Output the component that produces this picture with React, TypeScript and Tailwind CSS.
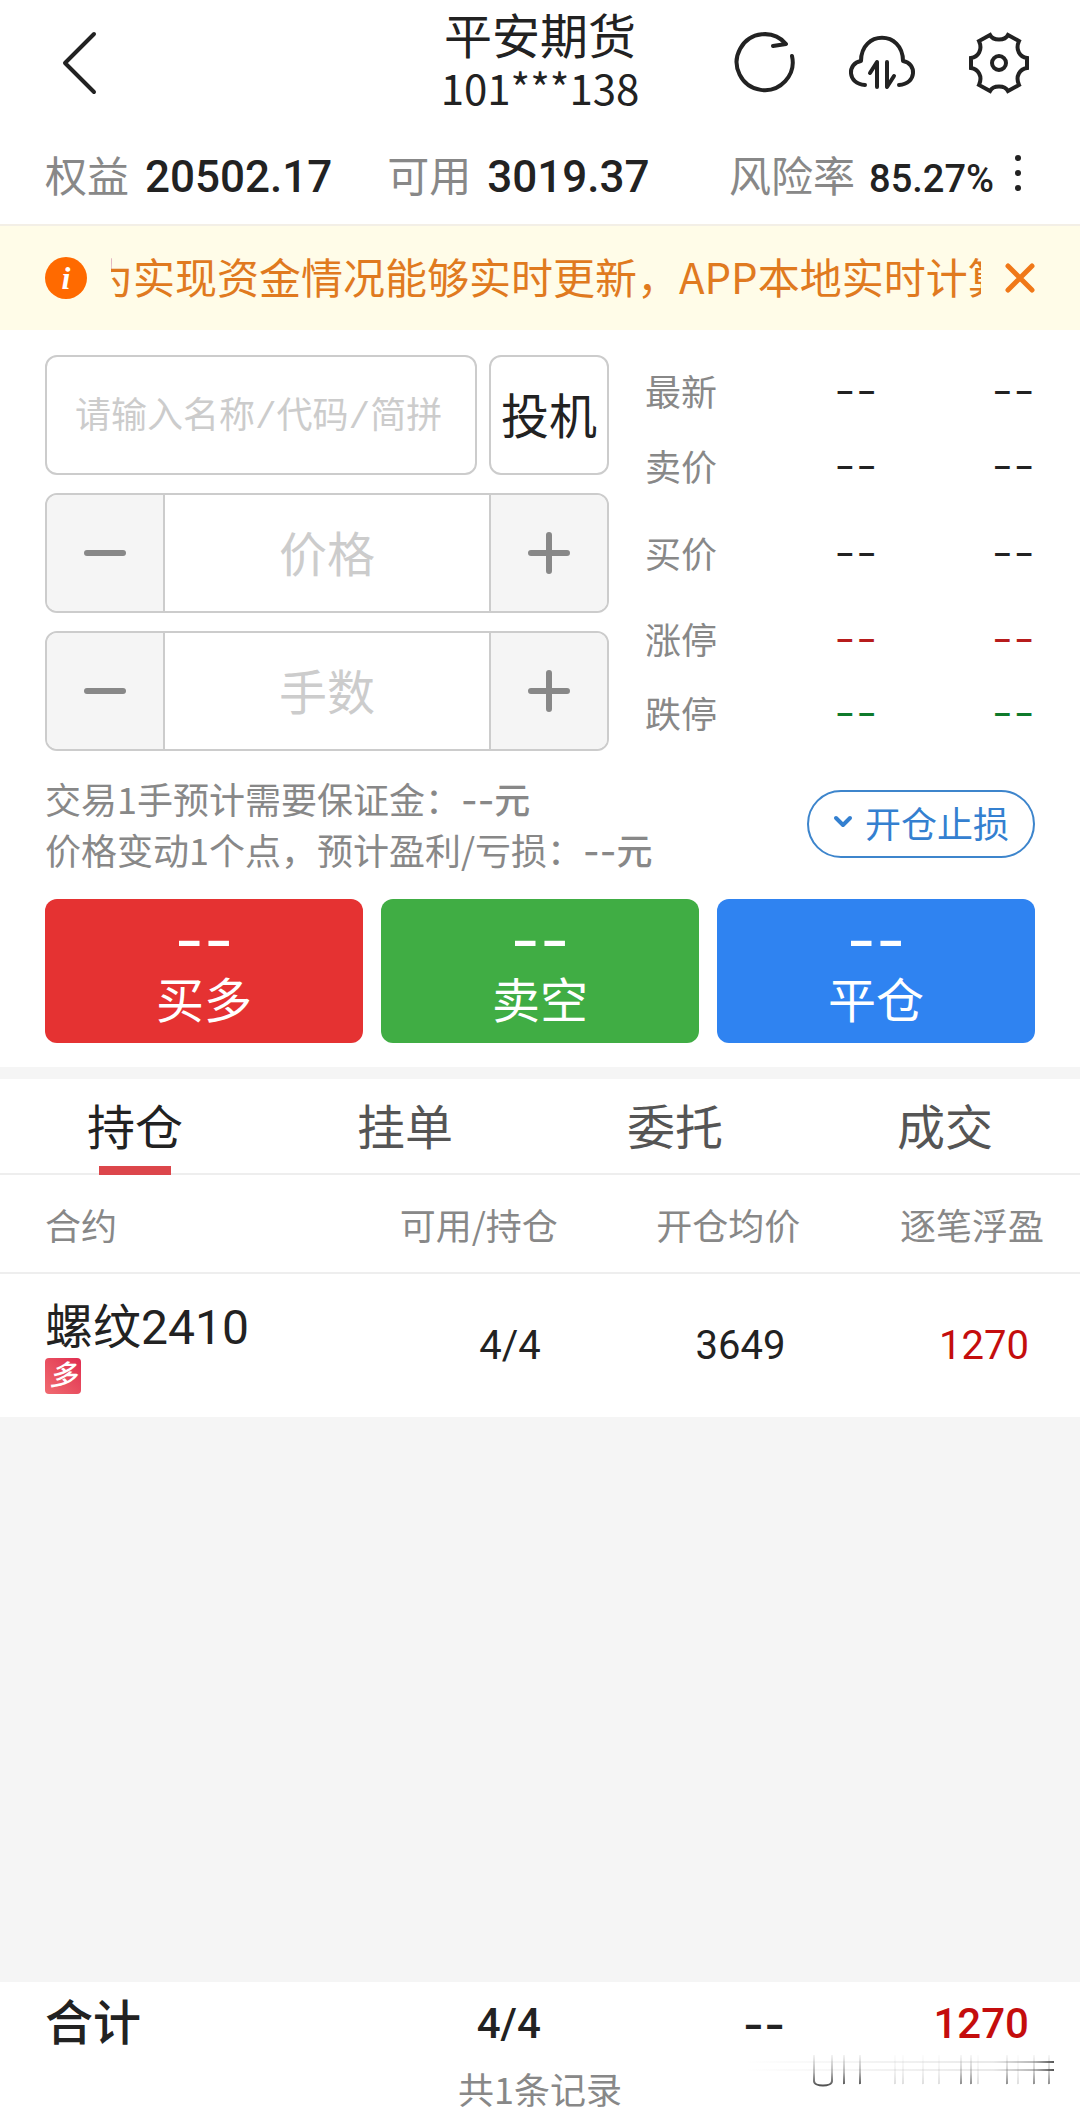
import { useState } from 'react';

const QUOTES = [
  { label: '最新', price: '--', volume: '--', color: 'text-[#222]', height: 'h-[70px]' },
  { label: '卖价', price: '--', volume: '--', color: 'text-[#222]', height: 'h-[80px]' },
  { label: '买价', price: '--', volume: '--', color: 'text-[#222]', height: 'h-[94px]' },
  { label: '涨停', price: '--', volume: '--', color: 'text-[#b71c1c]', height: 'h-[78px]' },
  { label: '跌停', price: '--', volume: '--', color: 'text-[#0f7a2b]', height: 'h-[70px]' },
];

const ACTIONS = [
  { label: '买多', price: '--', bg: 'bg-[#e53232]' },
  { label: '卖空', price: '--', bg: 'bg-[#40ad44]' },
  { label: '平仓', price: '--', bg: 'bg-[#2f83f1]' },
];

const TABS = ['持仓', '挂单', '委托', '成交'];

function Header() {
  return (
    <header className="flex h-[126px] items-center px-[45px] text-[#222]">
      <div className="flex-1">
        <button type="button" aria-label="返回" className="block">
          <svg width="72" height="72" viewBox="0 0 72 72" fill="none" stroke="currentColor" strokeWidth="4" strokeLinecap="round" strokeLinejoin="round">
            <path d="M49 7 20 36l29 29" />
          </svg>
        </button>
      </div>
      <div className="pb-[10px] text-center">
        <h1 className="text-[48px] leading-[58px]">平安期货</h1>
        <p className="text-[42px] leading-[50px]">101***138</p>
      </div>
      <div className="flex flex-1 justify-end gap-[45px]">
        <button type="button" aria-label="刷新">
          <svg width="72" height="72" viewBox="0 0 72 72" fill="none" stroke="currentColor" strokeWidth="4" strokeLinecap="round" strokeLinejoin="round">
            <path d="M63 29a28 28 0 1 1-6-12l-13 2" />
          </svg>
        </button>
        <button type="button" aria-label="同步">
          <svg width="72" height="72" viewBox="0 0 72 72" fill="none" stroke="currentColor" strokeWidth="4" strokeLinecap="round" strokeLinejoin="round">
            <path d="M19 58C1 57 1 36 15 34C15 3 57 3 57 34C71 36 71 57 53 58" />
            <path d="M24 46l7-11v25M48 49l-7 11V35" />
          </svg>
        </button>
        <button type="button" aria-label="设置">
          <svg width="72" height="72" viewBox="0 0 72 72" fill="none" stroke="currentColor" strokeWidth="4">
            <path d="M27 8C30 14 42 14 45 8L56 14C52 23 57 30 64 31V41C57 42 52 49 56 58L45 64C42 58 30 58 27 64L16 58C20 49 15 42 8 41V31C15 30 20 23 16 14Z" />
            <circle cx="36" cy="36" r="7" />
          </svg>
        </button>
      </div>
    </header>
  );
}

function AccountBar() {
  return (
    <section className="flex h-[98px] items-baseline pl-[45px] pr-[58px] pt-[18px] text-[#222]">
      <div className="flex items-baseline gap-4">
        <span className="text-[42px] leading-[60px] text-[#888]">权益</span>
        <span className="font-[Roboto] text-[44px] font-medium">20502.17</span>
      </div>
      <div className="ml-[55px] flex items-baseline gap-4">
        <span className="text-[42px] leading-[60px] text-[#888]">可用</span>
        <span className="font-[Roboto] text-[44px] font-medium">3019.37</span>
      </div>
      <div className="ml-auto flex items-baseline">
        <span className="text-[42px] leading-[60px] text-[#888]">风险率</span>
        <span className="ml-[14px] font-[Roboto] text-[38px] font-medium">85.27%</span>
        <button type="button" aria-label="更多" className="ml-[20px]">
          <svg width="8" height="38" viewBox="0 0 8 38" fill="currentColor">
            <circle cx="4" cy="4" r="3" />
            <circle cx="4" cy="19" r="3" />
            <circle cx="4" cy="34" r="3" />
          </svg>
        </button>
      </div>
    </section>
  );
}

function Notice({ onClose }: { onClose: () => void }) {
  return (
    <div className="flex h-[106px] items-center border-t-2 border-[#f3efe6] bg-[#fffce8] px-[45px]">
      <span className="flex h-[42px] w-[42px] shrink-0 items-center justify-center rounded-full bg-[#ff6a00] font-['Liberation_Serif',serif] text-[32px] font-bold italic leading-none text-white">
        i
      </span>
      <div className="ml-[24px] flex min-w-0 flex-1 overflow-hidden pb-[4px] text-[42px] leading-[60px] text-[#e07a1f]">
        <span className="-ml-[20px] whitespace-nowrap">为实现资金情况能够实时更新，APP本地实时计算</span>
      </div>
      <button type="button" aria-label="关闭" onClick={onClose} className="ml-[24px] text-[#f07818]">
        <svg width="30" height="30" viewBox="0 0 30 30" fill="none" stroke="currentColor" strokeWidth="5" strokeLinecap="round">
          <path d="M3 3l24 24M27 3 3 27" />
        </svg>
      </button>
    </div>
  );
}

function Stepper({ label }: { label: string }) {
  return (
    <div className="flex h-[120px] overflow-hidden rounded-xl border-2 border-[#ccc]">
      <button type="button" aria-label={`减少${label}`} className="flex w-[118px] shrink-0 items-center justify-center border-r-2 border-[#ccc] bg-[#f5f5f5] text-[#888]">
        <svg width="44" height="44" viewBox="0 0 44 44" stroke="currentColor" strokeWidth="6" strokeLinecap="round">
          <path d="M4 22h36" />
        </svg>
      </button>
      <input aria-label={label} placeholder={label} className="min-w-0 flex-1 bg-white pb-[4px] text-center text-[48px] text-[#222] outline-none placeholder:text-[#ccc]" />
      <button type="button" aria-label={`增加${label}`} className="flex w-[118px] shrink-0 items-center justify-center border-l-2 border-[#ccc] bg-[#f5f5f5] text-[#888]">
        <svg width="44" height="44" viewBox="0 0 44 44" stroke="currentColor" strokeWidth="6" strokeLinecap="round">
          <path d="M4 22h36M22 4v36" />
        </svg>
      </button>
    </div>
  );
}

function OrderForm() {
  return (
    <section className="grid grid-cols-[minmax(0,564fr)_minmax(0,390fr)] gap-[36px] px-[45px] pt-[25px]">
      <div className="flex flex-col gap-[18px]">
        <div className="flex h-[120px] gap-[12px]">
          <input
            aria-label="合约"
            placeholder="请输入名称/代码/简拼"
            className="min-w-0 flex-1 rounded-xl border-2 border-[#ccc] px-[28px] pt-[8px] font-['Liberation_Mono','Noto_Sans_CJK_SC',monospace] text-[36px] text-[#222] outline-none placeholder:text-[#ccc]"
          />
          <button type="button" className="w-[120px] shrink-0 whitespace-nowrap rounded-xl border-2 border-[#ccc] pb-[4px] text-[48px] text-[#222]">投机</button>
        </div>
        <Stepper label="价格" />
        <Stepper label="手数" />
      </div>
      <dl className="whitespace-nowrap">
        {QUOTES.map((q) => (
          <div key={q.label} className={`flex items-center ${q.height}`}>
            <dt className="flex-1 text-[36px] text-[#888]">{q.label}</dt>
            <dd className={`font-[Inter] text-[48px] font-light leading-none ${q.color}`}>{q.price}</dd>
            <dd className={`ml-[114px] font-[Inter] text-[48px] font-light leading-none ${q.color}`}>{q.volume}</dd>
          </div>
        ))}
      </dl>
    </section>
  );
}

function Estimate() {
  return (
    <section className="flex items-center justify-between px-[45px] pt-[22px] text-[36px] leading-[51px] text-[#888]">
      <div>
        <p>交易1手预计需要保证金：<b className="font-[Inter,'Noto_Sans_CJK_SC'] font-medium leading-none">--元</b></p>
        <p>价格变动1个点，预计盈利/亏损：<b className="font-[Inter,'Noto_Sans_CJK_SC'] font-medium leading-none">--元</b></p>
      </div>
      <button type="button" className="flex h-[68px] items-center gap-[12px] rounded-full border-2 border-[#3d85cc] px-[24px] pb-[4px] text-[#3480d0]">
        <svg width="20" height="14" viewBox="0 0 20 14" fill="none" stroke="currentColor" strokeWidth="4" strokeLinecap="round" strokeLinejoin="round">
          <path d="M3 3l7 7 7-7" />
        </svg>
        开仓止损
      </button>
    </section>
  );
}

function Actions() {
  return (
    <section className="grid grid-cols-3 gap-[18px] px-[45px] py-[24px]">
      {ACTIONS.map((a) => (
        <button key={a.label} type="button" className={`flex h-[144px] flex-col items-center rounded-xl pt-[12px] text-white ${a.bg}`}>
          <span className="font-[Inter] text-[64px] leading-[58px]">{a.price}</span>
          <span className="text-[48px] leading-[56px]">{a.label}</span>
        </button>
      ))}
    </section>
  );
}

function Positions() {
  return (
    <table className="w-full table-fixed text-[#222]">
      <colgroup>
        <col className="w-[32%]" />
        <col className="w-[24%]" />
        <col className="w-[22%]" />
        <col className="w-[22%]" />
      </colgroup>
      <thead>
        <tr className="h-[98px] border-b-2 border-[#eee] text-[36px] text-[#888]">
          <th className="pl-[45px] text-left font-normal">合约</th>
          <th className="pr-[47px] text-right font-normal">可用/持仓</th>
          <th className="pr-[42px] text-right font-normal">开仓均价</th>
          <th className="pr-[36px] text-right font-normal">逐笔浮盈</th>
        </tr>
      </thead>
      <tbody>
        <tr className="h-[144px] font-[Roboto,'Noto_Sans_CJK_SC'] text-[40px]">
          <td className="pl-[45px]">
            <div className="text-[48px] leading-[60px]">螺纹2410</div>
            <span className="flex h-[36px] w-[36px] items-center justify-center rounded-sm bg-linear-to-tr from-[#f06a70] to-[#e02a50] text-[28px] font-medium italic leading-none text-white">多</span>
          </td>
          <td className="pr-[64px] text-right">4/4</td>
          <td className="pr-[57px] text-right">3649</td>
          <td className="pr-[51px] text-right text-[#c40d0d]">1270</td>
        </tr>
      </tbody>
    </table>
  );
}

// Faded stamp in the corner of the footer
function Stamp() {
  return (
    <svg className="absolute bottom-[20px] right-[24px] opacity-80" width="312" height="36" viewBox="0 0 312 36" fill="none" aria-hidden="true">
      <defs>
        <linearGradient id="stampV" x1="0" y1="0" x2="0" y2="34" gradientUnits="userSpaceOnUse">
          <stop offset="0" stopColor="#222" stopOpacity="0" />
          <stop offset="0.6" stopColor="#222" stopOpacity="0.4" />
          <stop offset="1" stopColor="#222" />
        </linearGradient>
        <linearGradient id="stampH" x1="0" y1="0" x2="312" y2="0" gradientUnits="userSpaceOnUse">
          <stop offset="0" stopColor="#222" stopOpacity="0" />
          <stop offset="0.8" stopColor="#222" stopOpacity="0.12" />
          <stop offset="0.93" stopColor="#222" stopOpacity="0.4" />
          <stop offset="1" stopColor="#222" />
        </linearGradient>
      </defs>
      <g stroke="url(#stampV)" strokeWidth="2">
        <path d="M70 3v26c0 6 18 6 18 0V3M100 3v28.5l.1.5M116 3v28.5l.1.5" />
        <path opacity="0.7" d="M217 3v28.5l.1.5M227 3v28.5l.1.5M263 3v28.5l.1.5M290 3v28.5l.1.5M305 3v28.5l.1.5" />
        <path opacity="0.2" d="M151 3v28.5l.1.5M159 3v28.5l.1.5M179 3v28.5l.1.5M195 3v28.5l.1.5M234 3v28.5l.1.5M274 3v28.5l.1.5" />
      </g>
      <path fill="url(#stampH)" d="M0 9h310v2H0zM0 17h310v2H0z" />
    </svg>
  );
}

export default function App() {
  const [tab, setTab] = useState(TABS[0]);
  const [showNotice, setShowNotice] = useState(true);

  return (
    <main className="flex min-h-screen flex-col bg-[#f5f5f5] font-['Noto_Sans_CJK_SC',sans-serif]">
      <div className="bg-white">
        <Header />
        <AccountBar />
        {showNotice && <Notice onClose={() => setShowNotice(false)} />}
        <OrderForm />
        <Estimate />
        <Actions />
      </div>

      <div className="mt-[12px] bg-white">
        <nav role="tablist" className="grid h-[96px] grid-cols-4 border-b-2 border-[#eee]">
          {TABS.map((t) => (
            <button
              key={t}
              type="button"
              role="tab"
              aria-selected={t === tab}
              onClick={() => setTab(t)}
              className={`flex flex-col items-center justify-between pt-[12px] text-[48px] leading-[66px] ${t === tab ? 'text-[#222]' : 'text-[#555]'}`}
            >
              {t}
              {t === tab && <span className="-mb-[2px] h-[9px] w-[72px] bg-[#dc464b]" />}
            </button>
          ))}
        </nav>
        <Positions />
      </div>

      <footer className="relative mt-auto bg-white text-[#222]">
        <div className="grid grid-cols-[32%_24%_22%_22%] items-center pt-[12px] font-[Roboto,'Noto_Sans_CJK_SC'] text-[42px] font-medium leading-[60px]">
          <span className="pl-[45px] text-[48px]">合计</span>
          <span className="pr-[64px] text-right">4/4</span>
          <span className="pr-[57px] text-right font-[Inter] text-[46px]">--</span>
          <span className="pr-[51px] text-right text-[#c40d0d]">1270</span>
        </div>
        <p className="pt-[14px] text-center text-[36px] leading-[40px] text-[#888]">共1条记录</p>
        <Stamp />
      </footer>
    </main>
  );
}
